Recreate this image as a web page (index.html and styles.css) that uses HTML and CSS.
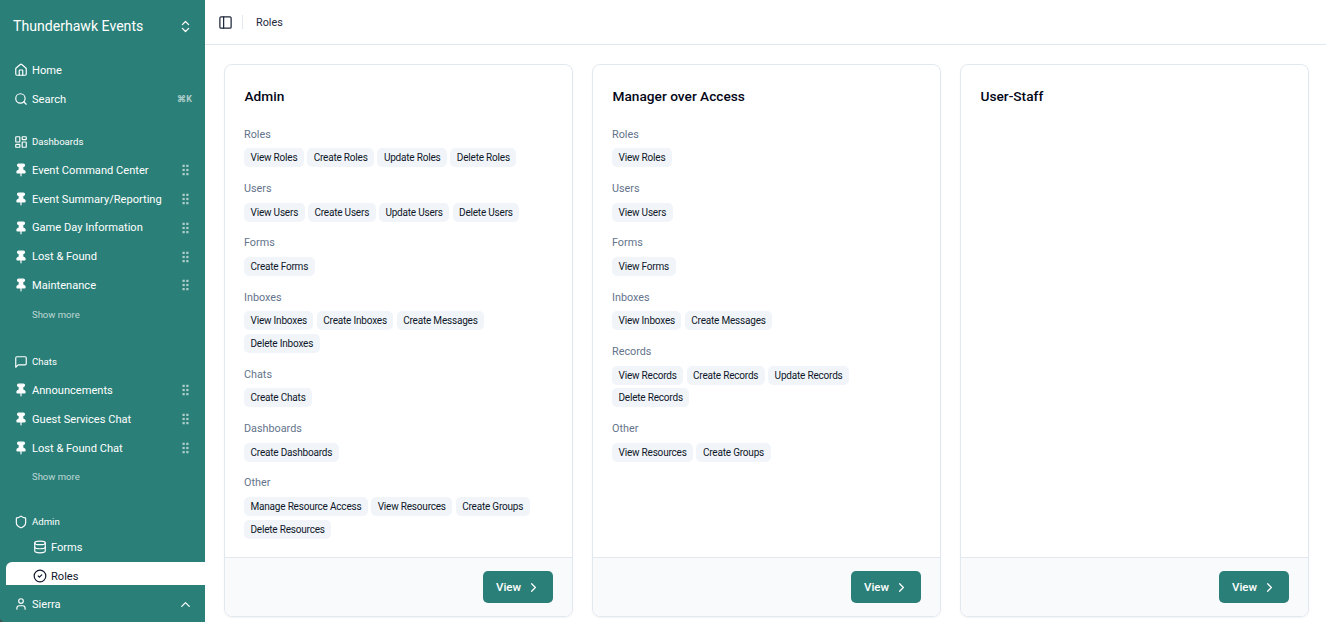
FILE: index.html
```html
<!DOCTYPE html>
<html lang="en">
<head>
<meta charset="utf-8">
<title>Roles</title>
<link rel="stylesheet" href="styles.css">
</head>
<body>
<svg class="sprite" aria-hidden="true">
<symbol id="i-home" viewBox="0 0 24 24"><path d="M15 21v-8a1 1 0 0 0-1-1h-4a1 1 0 0 0-1 1v8"/><path d="M3 10a2 2 0 0 1 .709-1.528l7-5.999a2 2 0 0 1 2.582 0l7 5.999A2 2 0 0 1 21 10v9a2 2 0 0 1-2 2H5a2 2 0 0 1-2-2z"/></symbol>
<symbol id="i-search" viewBox="0 0 24 24"><circle cx="11" cy="11" r="8"/><path d="m21 21-4.3-4.3"/></symbol>
<symbol id="i-dash" viewBox="0 0 24 24"><rect width="7" height="9" x="3" y="3" rx="1"/><rect width="7" height="5" x="14" y="3" rx="1"/><rect width="7" height="9" x="14" y="12" rx="1"/><rect width="7" height="5" x="3" y="16" rx="1"/></symbol>
<symbol id="i-chat" viewBox="0 0 24 24"><path d="M21 15a2 2 0 0 1-2 2H7l-4 4V5a2 2 0 0 1 2-2h14a2 2 0 0 1 2 2z"/></symbol>
<symbol id="i-shield" viewBox="0 0 24 24"><path d="M20 13c0 5-3.5 7.5-7.66 8.95a1 1 0 0 1-.67-.01C7.5 20.5 4 18 4 13V6a1 1 0 0 1 1-1c2 0 4.5-1.2 6.24-2.72a1.17 1.17 0 0 1 1.52 0C14.51 3.81 17 5 19 5a1 1 0 0 1 1 1z"/></symbol>
<symbol id="i-db" viewBox="0 0 24 24"><ellipse cx="12" cy="5" rx="9" ry="3"/><path d="M3 5V19A9 3 0 0 0 21 19V5"/><path d="M3 12A9 3 0 0 0 21 12"/></symbol>
<symbol id="i-check" viewBox="0 0 24 24"><circle cx="12" cy="12" r="10"/><path d="m9 12 2 2 4-4"/></symbol>
<symbol id="i-user" viewBox="0 0 24 24"><path d="M19 21v-2a4 4 0 0 0-4-4H9a4 4 0 0 0-4 4v2"/><circle cx="12" cy="7" r="4"/></symbol>
<symbol id="i-updown" viewBox="0 0 24 24"><path d="m7 15 5 5 5-5"/><path d="m7 9 5-5 5 5"/></symbol>
<symbol id="i-up" viewBox="0 0 24 24"><path d="m18 15-6-6-6 6"/></symbol>
<symbol id="i-right" viewBox="0 0 24 24"><path d="m9 18 6-6-6-6"/></symbol>
<symbol id="i-panel" viewBox="0 0 24 24"><rect width="18" height="18" x="3" y="3" rx="2"/><path d="M9 3v18"/></symbol>
<symbol id="i-pin" viewBox="0 0 24 24"><path d="M12 17v5"/><path class="fill" d="M9 10.76a2 2 0 0 1-1.11 1.79l-1.78.9A2 2 0 0 0 5 15.24V16a1 1 0 0 0 1 1h12a1 1 0 0 0 1-1v-.76a2 2 0 0 0-1.11-1.79l-1.78-.9A2 2 0 0 1 15 10.76V7a1 1 0 0 1 1-1 2 2 0 0 0 0-4H8a2 2 0 0 0 0 4 1 1 0 0 1 1 1z"/></symbol>
<symbol id="i-grip" viewBox="0 0 12 16"><rect x="2" y="1" width="3" height="3"/><rect x="7" y="1" width="3" height="3"/><rect x="2" y="6.5" width="3" height="3"/><rect x="7" y="6.5" width="3" height="3"/><rect x="2" y="12" width="3" height="3"/><rect x="7" y="12" width="3" height="3"/></symbol>
</svg>

<div class="app">
  <aside class="sidebar">
    <div class="workspace">
      <span class="workspace-name">Thunderhawk Events</span>
      <svg class="icon icon-15"><use href="#i-updown"/></svg>
    </div>
    <nav class="nav">
      <div class="group group-top">
        <a class="item"><svg class="icon"><use href="#i-home"/></svg><span class="label">Home</span></a>
        <a class="item"><svg class="icon"><use href="#i-search"/></svg><span class="label">Search</span><kbd class="kbd">⌘K</kbd></a>
      </div>
      <div class="group">
        <div class="heading"><svg class="icon"><use href="#i-dash"/></svg><span>Dashboards</span></div>
        <a class="item"><svg class="pin"><use href="#i-pin"/></svg><span class="label">Event Command Center</span><svg class="grip"><use href="#i-grip"/></svg></a>
        <a class="item"><svg class="pin"><use href="#i-pin"/></svg><span class="label">Event Summary/Reporting</span><svg class="grip"><use href="#i-grip"/></svg></a>
        <a class="item"><svg class="pin"><use href="#i-pin"/></svg><span class="label">Game Day Information</span><svg class="grip"><use href="#i-grip"/></svg></a>
        <a class="item"><svg class="pin"><use href="#i-pin"/></svg><span class="label">Lost &amp; Found</span><svg class="grip"><use href="#i-grip"/></svg></a>
        <a class="item"><svg class="pin"><use href="#i-pin"/></svg><span class="label">Maintenance</span><svg class="grip"><use href="#i-grip"/></svg></a>
        <a class="more">Show more</a>
      </div>
      <div class="group">
        <div class="heading"><svg class="icon"><use href="#i-chat"/></svg><span>Chats</span></div>
        <a class="item"><svg class="pin"><use href="#i-pin"/></svg><span class="label">Announcements</span><svg class="grip"><use href="#i-grip"/></svg></a>
        <a class="item"><svg class="pin"><use href="#i-pin"/></svg><span class="label">Guest Services Chat</span><svg class="grip"><use href="#i-grip"/></svg></a>
        <a class="item"><svg class="pin"><use href="#i-pin"/></svg><span class="label">Lost &amp; Found Chat</span><svg class="grip"><use href="#i-grip"/></svg></a>
        <a class="more">Show more</a>
      </div>
      <div class="group">
        <div class="heading heading-admin"><svg class="icon"><use href="#i-shield"/></svg><span>Admin</span></div>
        <a class="item sub"><svg class="icon"><use href="#i-db"/></svg><span class="label">Forms</span></a>
        <a class="item sub active"><svg class="icon"><use href="#i-check"/></svg><span class="label">Roles</span></a>
      </div>
    </nav>
    <div class="account">
      <svg class="icon"><use href="#i-user"/></svg><span class="label">Sierra</span>
      <svg class="icon icon-15"><use href="#i-up"/></svg>
    </div>
  </aside>

  <main class="main">
    <header class="topbar">
      <svg class="icon icon-15 dark"><use href="#i-panel"/></svg>
      <span class="divider"></span>
      <span class="crumb">Roles</span>
    </header>
    <div class="cards">
      <article class="card">
        <div class="card-body">
          <h2 class="card-title">Admin</h2>
          <section class="perm"><h3 class="perm-title">Roles</h3><div class="chips"><span class="chip">View Roles</span><span class="chip">Create Roles</span><span class="chip">Update Roles</span><span class="chip">Delete Roles</span></div></section>
          <section class="perm"><h3 class="perm-title">Users</h3><div class="chips"><span class="chip">View Users</span><span class="chip">Create Users</span><span class="chip">Update Users</span><span class="chip">Delete Users</span></div></section>
          <section class="perm"><h3 class="perm-title">Forms</h3><div class="chips"><span class="chip">Create Forms</span></div></section>
          <section class="perm"><h3 class="perm-title">Inboxes</h3><div class="chips"><span class="chip">View Inboxes</span><span class="chip">Create Inboxes</span><span class="chip">Create Messages</span><span class="chip">Delete Inboxes</span></div></section>
          <section class="perm"><h3 class="perm-title">Chats</h3><div class="chips"><span class="chip">Create Chats</span></div></section>
          <section class="perm"><h3 class="perm-title">Dashboards</h3><div class="chips"><span class="chip">Create Dashboards</span></div></section>
          <section class="perm"><h3 class="perm-title">Other</h3><div class="chips"><span class="chip">Manage Resource Access</span><span class="chip">View Resources</span><span class="chip">Create Groups</span><span class="chip">Delete Resources</span></div></section>
        </div>
        <footer class="card-foot"><a class="btn">View<svg class="icon icon-15"><use href="#i-right"/></svg></a></footer>
      </article>
      <article class="card">
        <div class="card-body">
          <h2 class="card-title">Manager over Access</h2>
          <section class="perm"><h3 class="perm-title">Roles</h3><div class="chips"><span class="chip">View Roles</span></div></section>
          <section class="perm"><h3 class="perm-title">Users</h3><div class="chips"><span class="chip">View Users</span></div></section>
          <section class="perm"><h3 class="perm-title">Forms</h3><div class="chips"><span class="chip">View Forms</span></div></section>
          <section class="perm"><h3 class="perm-title">Inboxes</h3><div class="chips"><span class="chip">View Inboxes</span><span class="chip">Create Messages</span></div></section>
          <section class="perm"><h3 class="perm-title">Records</h3><div class="chips"><span class="chip">View Records</span><span class="chip">Create Records</span><span class="chip">Update Records</span><span class="chip">Delete Records</span></div></section>
          <section class="perm"><h3 class="perm-title">Other</h3><div class="chips"><span class="chip">View Resources</span><span class="chip">Create Groups</span></div></section>
        </div>
        <footer class="card-foot"><a class="btn">View<svg class="icon icon-15"><use href="#i-right"/></svg></a></footer>
      </article>
      <article class="card">
        <div class="card-body">
          <h2 class="card-title">User-Staff</h2>
        </div>
        <footer class="card-foot"><a class="btn">View<svg class="icon icon-15"><use href="#i-right"/></svg></a></footer>
      </article>
    </div>
  </main>
</div>
</body>
</html>
```
FILE: styles.css
```css
* { box-sizing: border-box; }
html, body { margin: 0; height: 100%; overflow: hidden; }
body { font-family: Roboto, "Noto Sans", sans-serif; background: #fff; color: #0f172a; }
.sprite { display: none; }
.icon, .pin, .grip { fill: none; stroke: currentColor; stroke-width: 2; stroke-linecap: round; stroke-linejoin: round; flex: none; }
.icon { width: 14px; height: 14px; }
.icon-15 { width: 15px; height: 15px; }
.app { display: flex; height: 622px; background: #44514f; }

.sidebar { width: 205px; flex: none; display: flex; flex-direction: column; background: #2a7f78; color: #fff; border-bottom-left-radius: 5px; overflow: hidden; }
.workspace { height: 52px; flex: none; display: flex; align-items: center; justify-content: space-between; padding: 0 12.5px 0 13px; }
.workspace-name { font-size: 14.1px; font-weight: 400; }
.nav { flex: 1; min-height: 0; overflow: hidden; padding-left: 6px; }
.group { margin-bottom: 19.2px; }
.group-top { margin-top: 4px; margin-bottom: 14.1px; }
.item { display: flex; align-items: center; height: 28.8px; padding: 0 15px 0 7.5px; gap: 4.5px; font-size: 11.1px; }
.label { flex: 1; white-space: nowrap; }
.pin { width: 14px; height: 14px; fill: #fff; stroke: #fff; }
.grip { width: 9px; height: 12px; fill: rgba(255,255,255,.62); stroke: none; }
.kbd { font: 700 9px Roboto, sans-serif; opacity: .6; margin-right: -2px; }
.heading { display: flex; align-items: center; height: 28.2px; padding: 0 7.5px; gap: 4.5px; font-size: 9.6px; font-weight: 400; }
.heading-admin { height: 22.5px; }
.more { display: flex; align-items: center; height: 28.8px; padding-left: 26px; font-size: 9.5px; color: rgba(255,255,255,.7); }
.sub { padding-left: 26.5px; gap: 4.5px; }
.active { background: #fff; color: #0f172a; border-radius: 6px 0 0 6px; }
.account { height: 37px; flex: none; display: flex; align-items: center; gap: 4.5px; padding: 1px 12.5px 0 13.5px; font-size: 11.1px; background: #2a7f78; }

.main { flex: 1; min-width: 0; display: flex; flex-direction: column; background: #fff; }
.topbar { height: 45px; flex: none; display: flex; align-items: center; gap: 9px; padding: 0 13px; border-bottom: 1px solid #e2e8f0; }
.dark { color: #1e293b; }
.divider { width: 1px; height: 14px; background: #e2e8f0; }
.crumb { font-size: 10.8px; margin-left: 4px; color: #1e293b; }
.cards { flex: 1; display: grid; grid-template-columns: repeat(3, 349px); gap: 19px; padding: 19px 0 5px 19px; min-height: 0; }
.card { display: flex; flex-direction: column; border: 1px solid #e2e8f0; border-radius: 8px; box-shadow: 0 1px 2px rgba(15,23,42,.05); overflow: hidden; }
.card-body { flex: 1; padding: 20.5px 19px 20px; min-height: 0; }
.card-title { margin: 0 0 20.3px; padding-left: .5px; font-size: 13.7px; line-height: 20px; font-weight: 500; color: #020617; }
.perm { margin-bottom: 12.6px; }
.perm-title { margin: 0 0 4.7px; font-size: 10.8px; line-height: 18px; font-weight: 400; color: #64748b; }
.chips { display: flex; flex-wrap: wrap; gap: 3.7px 3.3px; }
.chip { height: 19px; display: flex; align-items: center; padding: 0 6.5px; border-radius: 5px; background: #f1f5f9; font-size: 10px; letter-spacing: -.2px; font-weight: 400; color: #0f172a; white-space: nowrap; }
.card-foot { flex: none; height: 59px; display: flex; align-items: center; justify-content: flex-end; padding: 0 19px; background: #f8fafc; border-top: 1px solid #e2e8f0; }
.btn { width: 70px; height: 32px; display: flex; align-items: center; gap: 5px; padding-left: 13px; border-radius: 5px; background: #2a7f78; color: #fff; font-size: 11.5px; font-weight: 500; }
```
